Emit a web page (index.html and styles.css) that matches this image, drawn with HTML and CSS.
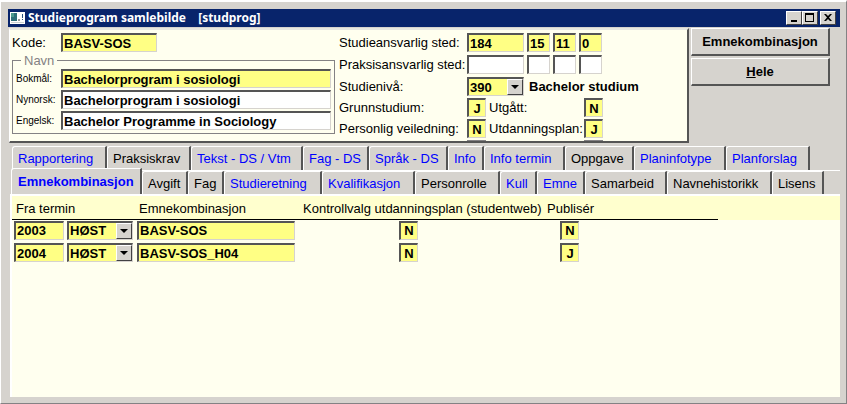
FILE: index.html
```html
<!DOCTYPE html>
<html lang="no">
<head>
    <meta charset="UTF-8">
    <meta name="viewport" content="width=device-width, initial-scale=1.0">
    <title>Studieprogram samlebilde [studprog]</title>
    <link rel="stylesheet" href="styles.css">
</head>
<body>
    <div class="window">
        <header class="titlebar">
            <svg class="app-icon" width="15" height="12" viewBox="0 0 15 12" aria-hidden="true">
                <rect width="15" height="12" fill="#fff"/>
                <rect x="1" y="1" width="6" height="8" fill="#2f6f78"/>
                <rect x="1" y="1" width="3" height="4" fill="#4d9a8c"/>
                <rect x="8" y="7" width="2" height="2" fill="#999"/>
                <rect x="12" y="2" width="1" height="4" fill="#28517c"/>
                <rect x="12" y="7" width="1" height="1" fill="#28517c"/>
                <rect x="1" y="10" width="13" height="1" fill="#c9d0d0"/>
            </svg>
            <h1 class="title">Studieprogram samlebilde <span class="module">[studprog]</span></h1>
            <div class="controls">
                <button class="control" aria-label="Minimer"><svg width="10" height="10" viewBox="0 0 10 10"><rect x="2" y="7" width="6" height="2"/></svg></button>
                <button class="control" aria-label="Maksimer"><svg width="10" height="10" viewBox="0 0 10 10"><path d="M0 0h9v9H0zM1 2v6h7V2z" fill-rule="evenodd"/></svg></button>
                <button class="control close" aria-label="Lukk"><svg width="10" height="10" viewBox="0 0 10 10"><path d="M1 1h2l2 2 2-2h2L6 4.500 9 8H7L5 6 3 8H1l3-3.500z"/></svg></button>
            </div>
        </header>

        <div class="top">
            <form class="panel">
                <div class="names">
                    <div class="code">
                        <label for="kode">Kode:</label>
                        <input class="field" id="kode" value="BASV-SOS">
                    </div>
                    <fieldset class="group">
                        <legend>Navn</legend>
                        <label for="bokmal">Bokmål:</label>
                        <input class="field" id="bokmal" value="Bachelorprogram i sosiologi">
                        <label for="nynorsk">Nynorsk:</label>
                        <input class="field white" id="nynorsk" value="Bachelorprogram i sosiologi">
                        <label for="engelsk">Engelsk:</label>
                        <input class="field white" id="engelsk" value="Bachelor Programme in Sociology">
                    </fieldset>
                </div>
                <div class="details">
                    <div class="line place">
                        <label for="sted">Studieansvarlig sted:</label>
                        <input class="field wide" id="sted" value="184">
                        <input class="field narrow" aria-label="Fakultet" value="15">
                        <input class="field narrow" aria-label="Institutt" value="11">
                        <input class="field narrow" aria-label="Gruppe" value="0">
                    </div>
                    <div class="line place">
                        <label for="praksis">Praksisansvarlig sted:</label>
                        <input class="field white wide" id="praksis">
                        <input class="field white narrow" aria-label="Praksis fakultet">
                        <input class="field white narrow" aria-label="Praksis institutt">
                        <input class="field white narrow" aria-label="Praksis gruppe">
                    </div>
                    <div class="line">
                        <label for="niva">Studienivå:</label>
                        <span class="combo wide"><select class="field" id="niva"><option>390</option></select></span>
                        <b class="level">Bachelor studium</b>
                    </div>
                    <div class="line">
                        <label for="grunn">Grunnstudium:</label>
                        <input class="field flag" id="grunn" value="J">
                        <label class="second" for="utgatt">Utgått:</label>
                        <input class="field flag" id="utgatt" value="N">
                    </div>
                    <div class="line">
                        <label for="veil">Personlig veiledning:</label>
                        <input class="field flag" id="veil" value="N">
                        <label class="second" for="plan">Utdanningsplan:</label>
                        <input class="field flag" id="plan" value="J">
                    </div>
                    <div class="line cut">
                        <span class="edge"></span>
                        <span class="edge"></span>
                    </div>
                </div>
            </form>
            <div class="actions">
                <button class="action">Emnekombinasjon</button>
                <button class="action"><u>H</u>ele</button>
            </div>
        </div>

        <nav class="tabs">
            <div class="tab-row back">
                <button class="tab filled">Rapportering</button>
                <button class="tab">Praksiskrav</button>
                <button class="tab filled">Tekst - DS / Vtm</button>
                <button class="tab filled">Fag - DS</button>
                <button class="tab filled">Språk - DS</button>
                <button class="tab filled">Info</button>
                <button class="tab filled">Info termin</button>
                <button class="tab">Oppgave</button>
                <button class="tab filled">Planinfotype</button>
                <button class="tab filled">Planforslag</button>
            </div>
            <div class="tab-row front">
                <button class="tab filled active">Emnekombinasjon</button>
                <button class="tab">Avgift</button>
                <button class="tab">Fag</button>
                <button class="tab filled">Studieretning</button>
                <button class="tab filled">Kvalifikasjon</button>
                <button class="tab">Personrolle</button>
                <button class="tab filled">Kull</button>
                <button class="tab filled">Emne</button>
                <button class="tab">Samarbeid</button>
                <button class="tab">Navnehistorikk</button>
                <button class="tab">Lisens</button>
            </div>
        </nav>

        <main class="sheet">
            <table class="list">
                <thead>
                    <tr>
                        <th class="term">Fra termin</th>
                        <th class="combination">Emnekombinasjon</th>
                        <th class="choice">Kontrollvalg utdanningsplan (studentweb)</th>
                        <th class="publish">Publisér</th>
                    </tr>
                </thead>
                <tbody>
                    <tr>
                        <td>
                            <div class="term-fields">
                                <input class="field year" aria-label="År" value="2003">
                                <span class="combo season"><select class="field" aria-label="Termin"><option>HØST</option></select></span>
                            </div>
                        </td>
                        <td><input class="field name" aria-label="Emnekombinasjon" value="BASV-SOS"></td>
                        <td class="choice-cell"><input class="field flag" aria-label="Kontrollvalg" value="N"></td>
                        <td class="publish-cell"><input class="field flag" aria-label="Publisér" value="N"></td>
                    </tr>
                    <tr>
                        <td>
                            <div class="term-fields">
                                <input class="field year" aria-label="År" value="2004">
                                <span class="combo season"><select class="field" aria-label="Termin"><option>HØST</option></select></span>
                            </div>
                        </td>
                        <td><input class="field name" aria-label="Emnekombinasjon" value="BASV-SOS_H04"></td>
                        <td class="choice-cell"><input class="field flag" aria-label="Kontrollvalg" value="N"></td>
                        <td class="publish-cell"><input class="field flag" aria-label="Publisér" value="J"></td>
                    </tr>
                </tbody>
            </table>
        </main>
    </div>
</body>
</html>
```
FILE: styles.css
```css
*, *::before, *::after {
    box-sizing: border-box;
}
body {
    margin: 0;
    background-color: #d6d3ce;
    font-family: "Liberation Sans", Arial, sans-serif;
    font-size: 13px;
    color: #000;
}
button, input, select {
    font: inherit;
    color: inherit;
    margin: 0;
}
.window {
    display: flex;
    flex-direction: column;
    min-height: 100vh;
    padding: 7px 6px 6px 7px;
    border: 1px solid #848284;
    border-top: 2px solid #fff;
    border-left-color: #fff;
}

/* title bar */
.titlebar {
    display: flex;
    align-items: center;
    height: 18px;
    padding: 0 4px 0 2px;
    background-color: #08246b;
    color: #fff;
}
.title {
    flex: 1;
    margin: 0 0 0 3px;
    font-family: "Noto Sans", Tahoma, sans-serif;
    font-size: 12px;
    line-height: 18px;
    font-weight: bold;
}
.module {
    margin-left: 9px;
}
.controls {
    display: flex;
}
.control {
    display: flex;
    align-items: center;
    justify-content: center;
    width: 16px;
    height: 14px;
    padding: 0;
    background-color: #d6d3ce;
    border: 1px solid #fff;
    border-right-color: #424142;
    border-bottom-color: #424142;
}
.close {
    margin-left: 2px;
}

/* sunken fields */
.field {
    width: 100%;
    height: 19px;
    padding: 0 0 0 1px;
    background-color: #ffff84;
    border: 1px solid #d6d3ce;
    border-top: 2px solid #555;
    border-left: 2px solid #555;
    border-radius: 0;
    font-weight: bold;
    appearance: none;
}
.white {
    background-color: #fff;
}
.field.wide, .combo.wide {
    width: 57px;
}
.field.narrow {
    width: 23px;
}
.field.flag {
    width: 19px;
    padding: 0;
    text-align: center;
}
.combo {
    position: relative;
    display: block;
    height: 19px;
}
.combo::after {
    content: "";
    position: absolute;
    top: 2px;
    right: 1px;
    width: 16px;
    height: 16px;
    background-color: #d6d3ce;
    border: 1px solid #fff;
    border-right-color: #424142;
    border-bottom-color: #424142;
    pointer-events: none;
}
.combo::before {
    content: "";
    position: absolute;
    z-index: 1;
    top: 8px;
    right: 5px;
    border: 4px solid transparent;
    border-top-color: #000;
    border-bottom: 0;
    pointer-events: none;
}

/* upper part */
.top {
    display: flex;
    gap: 2px;
    margin: 1px 0 0 1px;
}
.panel {
    display: flex;
    flex: 0 1 680px;
    gap: 4px;
    height: 115px;
    padding: 3px 0 0 2px;
    background-color: #ffffef;
    border: 2px solid #555;
    border-top: 2px solid #e8e8e0;
    border-left: 1px solid #fff;
    overflow: hidden;
}
.names {
    width: 323px;
}
.code {
    display: flex;
    align-items: center;
}
.code label {
    width: 49px;
}
.code .field {
    width: 96px;
}
.group {
    display: grid;
    grid-template-columns: 45px 1fr;
    align-items: center;
    row-gap: 2px;
    margin: 1px 0 0;
    padding: 1px 3px 3px 3px;
    border: 1px solid #848284;
    min-width: 0;
}
.group legend {
    margin-left: 5px;
    padding: 0 3px;
    color: #848284;
    line-height: 15px;
}
.group label {
    font-size: 10px;
}
.details {
    display: flex;
    flex-direction: column;
    gap: 2px;
}
.line {
    display: flex;
    align-items: center;
    gap: 3px;
    height: 19px;
}
.place {
    margin-bottom: 1px;
}
.line label {
    width: 125px;
    white-space: nowrap;
}
.line .second {
    width: 92px;
}
.level {
    padding-left: 2px;
}
.cut {
    align-items: flex-start;
    gap: 98px;
    padding-left: 128px;
}
.edge {
    width: 19px;
    height: 19px;
    background-color: #848284;
}
.actions {
    display: flex;
    flex-direction: column;
    gap: 2px;
    width: 139px;
}
.action {
    height: 28px;
    padding: 0;
    background-color: #d6d3ce;
    border: 1px solid #fff;
    border-right: 2px solid #555;
    border-bottom: 2px solid #555;
    font-weight: bold;
}

/* tabs */
.tabs {
    margin: 3px 0 0 3px;
}
.tab-row {
    display: grid;
    height: 24px;
}
.back {
    grid-template-columns: 95px 84px 112px 66px 79px 36px 81px 69px 92px 84px;
    padding-left: 1px;
}
.front {
    grid-template-columns: 131px 46px 36px 98px 93px 85px 37px 48px 82px 105px 52px;
    border-top: 1px solid #fff;
}
.tab {
    padding: 0 0 0 5px;
    background-color: #d6d3ce;
    border: 0;
    border-top: 1px solid #fff;
    border-left: 1px solid #fff;
    border-right: 2px solid #555;
    border-top-left-radius: 3px;
    text-align: left;
    white-space: nowrap;
}
.filled {
    color: #00f;
}
.active {
    margin-top: -3px;
    padding-left: 6px;
    font-weight: bold;
}

/* list */
.sheet {
    flex: 1;
    margin: 0 0 0 2px;
    background: #ffffef linear-gradient(#ffffce, #ffffce) no-repeat 0 0 / 100% 24px;
    border-top: 2px solid #fff;
    border-left: 2px solid #fff;
}
.list {
    width: 706px;
    border-collapse: collapse;
    table-layout: fixed;
}
.list th {
    height: 23px;
    padding: 3px 0 0 4px;
    border-bottom: 1px solid #000;
    font-weight: normal;
    text-align: left;
    white-space: nowrap;
}
.list td {
    height: 23px;
    padding: 1px 0 0 2px;
    vertical-align: top;
}
.list .field {
    display: block;
}
.term {
    width: 123px;
}
.combination {
    width: 164px;
}
.choice {
    width: 244px;
}
.term-fields {
    display: flex;
    gap: 3px;
}
.field.year {
    width: 50px;
}
.season {
    width: 66px;
}
.field.name {
    width: 158px;
}
.list .choice-cell {
    padding-left: 100px;
}
.list .publish-cell {
    padding-left: 17px;
}
```
